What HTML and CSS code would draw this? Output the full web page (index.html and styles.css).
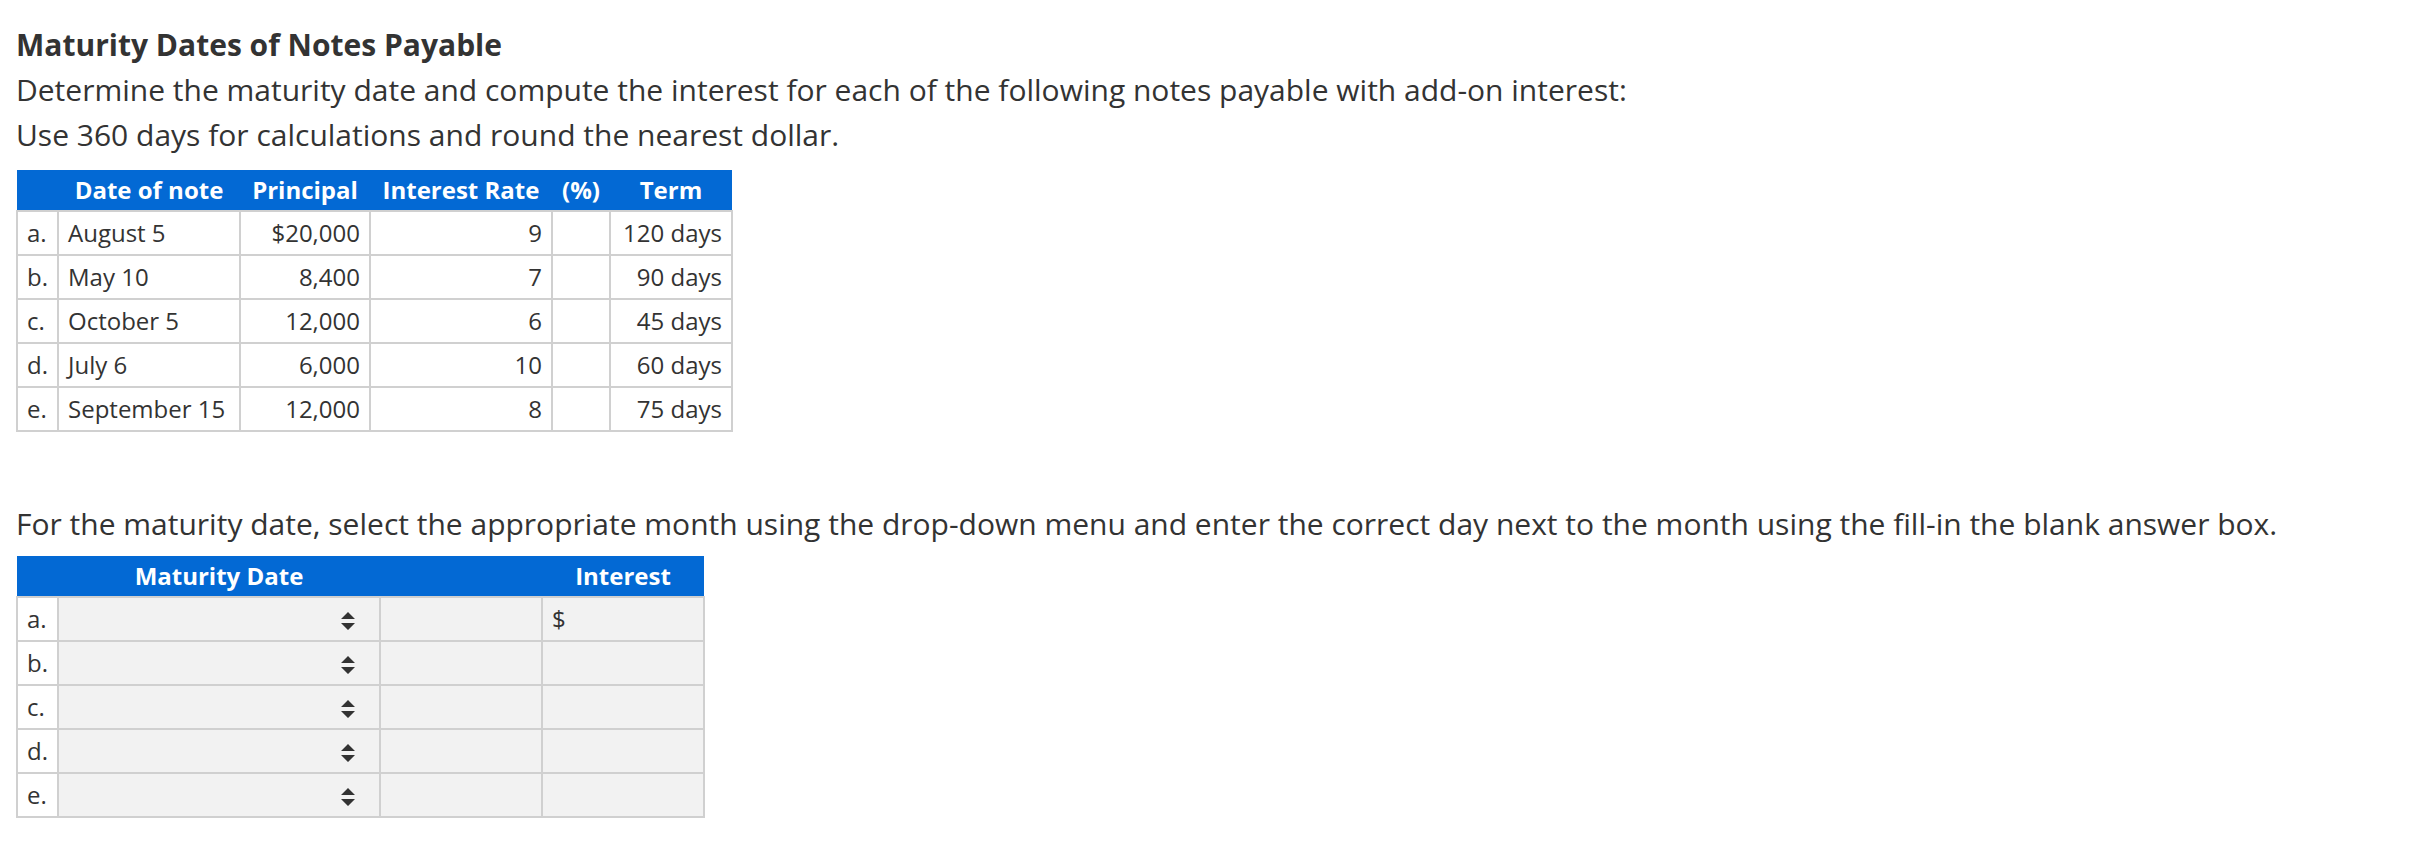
FILE: index.html
```html
<!DOCTYPE html>
<html>
<head>
<meta charset="utf-8">
<link rel="stylesheet" href="styles.css">
</head>
<body>
<div class="page">
  <div class="intro">
    <div class="title">Maturity Dates of Notes Payable</div>
    <div class="line">Determine the maturity date and compute the interest for each of the following notes payable with add-on interest:</div>
    <div class="line">Use 360 days for calculations and round the nearest dollar.</div>
  </div>

  <table class="grid notes">
    <colgroup>
      <col class="c-lbl"><col class="c-date"><col class="c-prin"><col class="c-rate"><col class="c-pct"><col class="c-term">
    </colgroup>
    <thead>
      <tr><th></th><th>Date of note</th><th>Principal</th><th>Interest Rate</th><th>(%)</th><th>Term</th></tr>
    </thead>
    <tbody>
      <tr><td>a.</td><td>August 5</td><td class="r">$20,000</td><td class="r">9</td><td></td><td class="r">120 days</td></tr>
      <tr><td>b.</td><td>May 10</td><td class="r">8,400</td><td class="r">7</td><td></td><td class="r">90 days</td></tr>
      <tr><td>c.</td><td>October 5</td><td class="r">12,000</td><td class="r">6</td><td></td><td class="r">45 days</td></tr>
      <tr><td>d.</td><td>July 6</td><td class="r">6,000</td><td class="r">10</td><td></td><td class="r">60 days</td></tr>
      <tr><td>e.</td><td>September 15</td><td class="r">12,000</td><td class="r">8</td><td></td><td class="r">75 days</td></tr>
    </tbody>
  </table>

  <p class="para">For the maturity date, select the appropriate month using the drop-down menu and enter the correct day next to the month using the fill-in the blank answer box.</p>

  <table class="grid answers">
    <colgroup>
      <col class="a-lbl"><col class="a-sel"><col class="a-day"><col class="a-int">
    </colgroup>
    <thead>
      <tr><th></th><th>Maturity Date</th><th></th><th>Interest</th></tr>
    </thead>
    <tbody>
      <tr><td class="lbl">a.</td><td class="sel"><span class="arrows"><svg width="16" height="19" viewBox="0 0 16 19"><path d="M8 0 L15 7 L1 7 Z M1 11 L15 11 L8 18 Z" fill="#333"/></svg></span></td><td class="in"></td><td class="in">$</td></tr>
      <tr><td class="lbl">b.</td><td class="sel"><span class="arrows"><svg width="16" height="19" viewBox="0 0 16 19"><path d="M8 0 L15 7 L1 7 Z M1 11 L15 11 L8 18 Z" fill="#333"/></svg></span></td><td class="in"></td><td class="in"></td></tr>
      <tr><td class="lbl">c.</td><td class="sel"><span class="arrows"><svg width="16" height="19" viewBox="0 0 16 19"><path d="M8 0 L15 7 L1 7 Z M1 11 L15 11 L8 18 Z" fill="#333"/></svg></span></td><td class="in"></td><td class="in"></td></tr>
      <tr><td class="lbl">d.</td><td class="sel"><span class="arrows"><svg width="16" height="19" viewBox="0 0 16 19"><path d="M8 0 L15 7 L1 7 Z M1 11 L15 11 L8 18 Z" fill="#333"/></svg></span></td><td class="in"></td><td class="in"></td></tr>
      <tr><td class="lbl">e.</td><td class="sel"><span class="arrows"><svg width="16" height="19" viewBox="0 0 16 19"><path d="M8 0 L15 7 L1 7 Z M1 11 L15 11 L8 18 Z" fill="#333"/></svg></span></td><td class="in"></td><td class="in"></td></tr>
    </tbody>
  </table>
</div>
</body>
</html>
```

FILE: styles.css
```css
html, body {
  margin: 0;
  padding: 0;
  background: #fff;
}
body {
  font-family: "Open Sans", "Liberation Sans", sans-serif;
  color: #333;
}
.page {
  padding: 22px 0 0 16px;
}
.intro {
  font-size: 30px;
  line-height: 45px;
}
.title {
  font-weight: 700;
}
.grid {
  border-collapse: collapse;
  table-layout: fixed;
  font-size: 24px;
}
.grid th {
  background: #0369d4;
  color: #fff;
  font-weight: 700;
  height: 40px;
  padding: 0;
  text-align: center;
  line-height: 40px;
}
.grid td {
  border: 2px solid #d0d0d0;
  height: 42px;
  padding: 0 9px;
  line-height: 42px;
  text-align: left;
  white-space: nowrap;
}
.grid td.r {
  text-align: right;
}
.notes {
  margin-top: 13px;
  width: 715px;
}
.c-lbl { width: 41px; }
.c-date { width: 182px; }
.c-prin { width: 130px; }
.c-rate { width: 182px; }
.c-pct { width: 58px; }
.c-term { width: 122px; }

.para {
  margin: 69px 0 0 0;
  font-size: 30px;
  line-height: 45px;
}
.answers {
  margin-top: 10px;
  width: 687px;
}
.a-lbl { width: 41px; }
.a-sel { width: 322px; }
.a-day { width: 162px; }
.a-int { width: 162px; }
.answers td.lbl {
  background: #fff;
}
.answers td.sel,
.answers td.in {
  background: #f2f2f2;
}
.answers td.sel {
  text-align: right;
  padding-right: 23px;
}
.arrows {
  display: inline-flex;
  vertical-align: middle;
}
.arrows svg {
  display: block;
}
```
